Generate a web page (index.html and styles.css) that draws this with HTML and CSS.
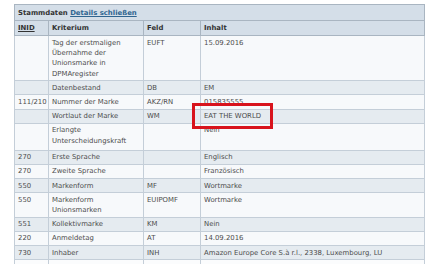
FILE: index.html
```html
<!DOCTYPE html>
<html lang="de">
<head>
<meta charset="utf-8">
<title>Stammdaten</title>
<link rel="stylesheet" href="styles.css">
</head>
<body>
<div class="page">
<table class="data">
  <colgroup>
    <col class="c-inid">
    <col class="c-krit">
    <col class="c-feld">
    <col class="c-inhalt">
  </colgroup>
  <thead>
    <tr class="title-row">
      <th colspan="4">Stammdaten <a class="toggle" href="#">Details schließen</a></th>
    </tr>
    <tr class="head-row">
      <th><span class="inid">INID</span></th>
      <th>Kriterium</th>
      <th>Feld</th>
      <th>Inhalt</th>
    </tr>
  </thead>
  <tbody>
    <tr><td></td><td>Tag der erstmaligen Übernahme der Unionsmarke in DPMAregister</td><td>EUFT</td><td>15.09.2016</td></tr>
    <tr><td></td><td>Datenbestand</td><td>DB</td><td>EM</td></tr>
    <tr><td>111/210</td><td>Nummer der Marke</td><td>AKZ/RN</td><td>015835555</td></tr>
    <tr><td></td><td>Wortlaut der Marke</td><td>WM</td><td><div class="marked">EAT THE WORLD<span class="highlight"></span></div></td></tr>
    <tr class="tall"><td></td><td>Erlangte Unterscheidungskraft</td><td></td><td>Nein</td></tr>
    <tr><td>270</td><td>Erste Sprache</td><td></td><td>Englisch</td></tr>
    <tr><td>270</td><td>Zweite Sprache</td><td></td><td>Französisch</td></tr>
    <tr><td>550</td><td>Markenform</td><td>MF</td><td>Wortmarke</td></tr>
    <tr><td>550</td><td>Markenform Unionsmarken</td><td>EUIPOMF</td><td>Wortmarke</td></tr>
    <tr><td>551</td><td>Kollektivmarke</td><td>KM</td><td>Nein</td></tr>
    <tr><td>220</td><td>Anmeldetag</td><td>AT</td><td>14.09.2016</td></tr>
    <tr><td>730</td><td>Inhaber</td><td>INH</td><td>Amazon Europe Core S.à r.l., 2338, Luxembourg, LU</td></tr>
    <tr class="fade"><td></td><td></td><td></td><td></td></tr>
  </tbody>
</table>
</div>
</body>
</html>
```

FILE: styles.css
```css
html, body {
  margin: 0;
  padding: 0;
  background: #ffffff;
  overflow: hidden;
}

.page {
  padding: 4px 15px 0 14px;
  font-family: "DejaVu Sans", Verdana, sans-serif;
  font-size: 6.9px;
  color: #4d4d4d;
}

.data {
  width: 100%;
  border-collapse: collapse;
  table-layout: fixed;
  border: 1px solid #c3cdd7;
}

.c-inid { width: 34px; }
.c-krit { width: 95px; }
.c-feld { width: 57px; }

.data th,
.data td {
  text-align: left;
  vertical-align: top;
  line-height: 10.2px;
  padding: 1.5px 3px 1.5px 3px;
  border: 1px solid #c4ced8;
}

.data thead th {
  background: #d4dee8;
  font-weight: bold;
  color: #333333;
  padding: 2.5px 3px 2px 3px;
  border-color: #a9b5c1;
}

.title-row th {
  border-left-color: #c3cdd7;
  border-right-color: #c3cdd7;
}

.toggle {
  color: #2f6590;
  text-decoration: underline;
}

.inid {
  text-decoration: underline;
}

.data tbody tr:nth-child(odd) td {
  background: #f7f9fb;
}

.data tbody tr:nth-child(even) td {
  background: #e5ebf0;
}

.tall td {
  padding-bottom: 4px;
}

.data tbody tr.fade td {
  background: #fbfcfd;
  height: 10px;
  border-bottom-color: #ffffff;
}

.marked {
  position: relative;
}

.highlight {
  position: absolute;
  left: -12px;
  top: -8px;
  width: 81px;
  height: 26px;
  box-sizing: border-box;
  border: 3px solid #d8131c;
}
```
